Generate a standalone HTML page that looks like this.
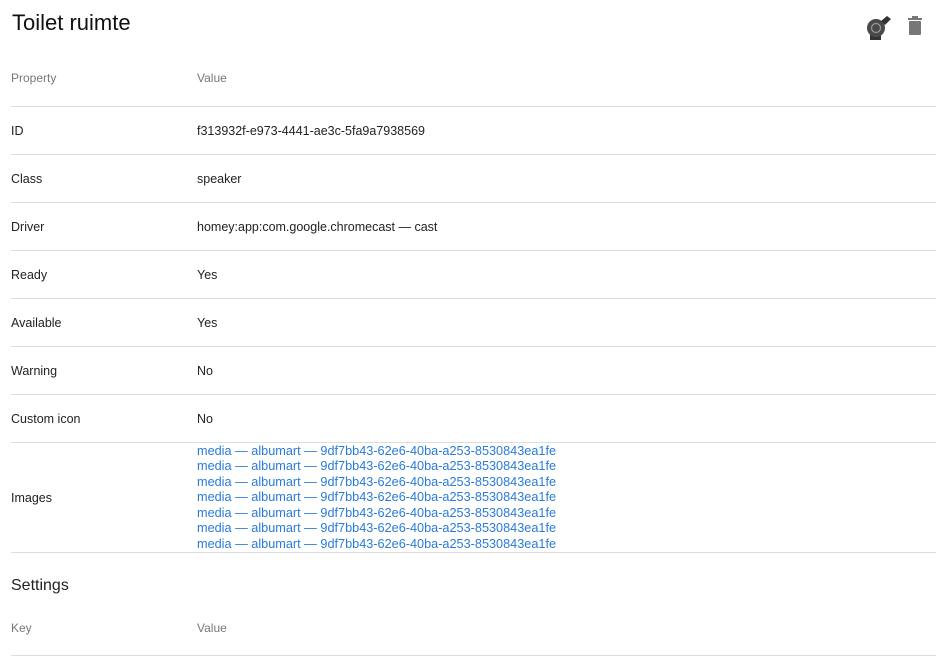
<!DOCTYPE html>
<html><head><style>
body{margin:0;width:936px;height:656px;background:#fff;font-family:"Liberation Sans",sans-serif;position:relative;overflow:hidden;color:#222}
.t{position:absolute;white-space:nowrap}
.k{left:11px;font-size:12.5px}
.v{left:197px;font-size:12.5px}
.h{color:#777;font-size:12px}
.l{position:absolute;left:11px;right:0;height:1px;background:#ddd}
.a{left:197px;font-size:12.7px;color:#2a7bd8}
</style></head><body>
<div class="t" style="left:12px;top:10px;font-size:22px;color:#111">Toilet ruimte</div>
<svg style="position:absolute;left:864px;top:14px" width="30" height="26" viewBox="0 0 30 26">
<rect x="6" y="17" width="11" height="9" fill="#333"/>
<circle cx="12" cy="14" r="9" fill="#4a4a4a"/><circle cx="12" cy="14" r="4.5" fill="none" stroke="#999" stroke-width="1.2"/>
<path d="M17 7 L23 2 L27 5 L21 11Z" fill="#333"/>
</svg>
<svg style="position:absolute;left:907px;top:16px" width="16" height="20" viewBox="0 0 16 20">
<rect x="5" y="0" width="6" height="2" fill="#777"/><rect x="1" y="2" width="14" height="2" fill="#777"/>
<rect x="2" y="5" width="12" height="14" rx="1" fill="#777"/>
</svg>
<div class="t k h" style="top:71px">Property</div><div class="t v h" style="top:71px">Value</div>
<div class="l" style="top:106px"></div>
<div class="t k" style="top:124px">ID</div><div class="t v" style="top:124px">f313932f-e973-4441-ae3c-5fa9a7938569</div>
<div class="l" style="top:154px"></div>
<div class="t k" style="top:172px">Class</div><div class="t v" style="top:172px">speaker</div>
<div class="l" style="top:202px"></div>
<div class="t k" style="top:220px">Driver</div><div class="t v" style="top:220px">homey:app:com.google.chromecast — cast</div>
<div class="l" style="top:250px"></div>
<div class="t k" style="top:268px">Ready</div><div class="t v" style="top:268px">Yes</div>
<div class="l" style="top:298px"></div>
<div class="t k" style="top:316px">Available</div><div class="t v" style="top:316px">Yes</div>
<div class="l" style="top:346px"></div>
<div class="t k" style="top:364px">Warning</div><div class="t v" style="top:364px">No</div>
<div class="l" style="top:394px"></div>
<div class="t k" style="top:412px">Custom icon</div><div class="t v" style="top:412px">No</div>
<div class="l" style="top:442px"></div>
<div class="t k" style="top:491px">Images</div>
<div class="t a" style="top:443.5px">media — albumart — 9df7bb43-62e6-40ba-a253-8530843ea1fe</div>
<div class="t a" style="top:459px">media — albumart — 9df7bb43-62e6-40ba-a253-8530843ea1fe</div>
<div class="t a" style="top:474.5px">media — albumart — 9df7bb43-62e6-40ba-a253-8530843ea1fe</div>
<div class="t a" style="top:490px">media — albumart — 9df7bb43-62e6-40ba-a253-8530843ea1fe</div>
<div class="t a" style="top:505.5px">media — albumart — 9df7bb43-62e6-40ba-a253-8530843ea1fe</div>
<div class="t a" style="top:521px">media — albumart — 9df7bb43-62e6-40ba-a253-8530843ea1fe</div>
<div class="t a" style="top:536.5px">media — albumart — 9df7bb43-62e6-40ba-a253-8530843ea1fe</div>
<div class="l" style="top:552px"></div>
<div class="t" style="left:11px;top:577px;font-size:16px">Settings</div>
<div class="t k h" style="top:621px">Key</div><div class="t v h" style="top:621px">Value</div>
<div class="l" style="top:655px"></div>
</body></html>
